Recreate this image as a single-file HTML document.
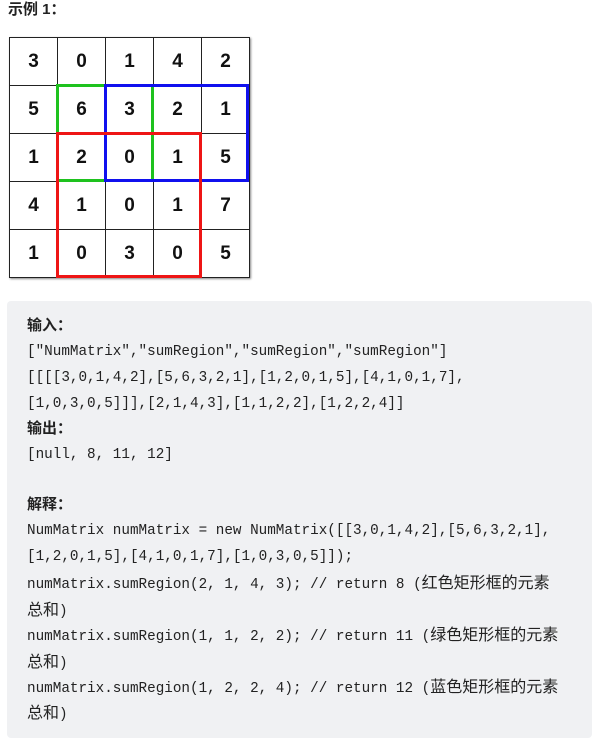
<!DOCTYPE html>
<html><head><meta charset="utf-8"><style>
body{margin:0;background:#fff;width:613px;height:741px;overflow:hidden;font-family:"Liberation Sans","Noto Sans CJK SC",sans-serif;}
.t{position:absolute;left:8px;top:0px;font-size:15px;font-weight:bold;color:#222;line-height:20px}
.g{position:absolute;left:9px;top:37px;border-collapse:collapse;box-shadow:1px 1px 2px #888}
.g td{width:47px;height:47px;border:1px solid #222;text-align:center;font-weight:bold;font-size:19px;padding:0;color:#111}
.b{position:absolute;box-sizing:border-box;border:3px solid}
.p{position:absolute;left:7px;top:301px;width:585px;height:437px;background:#f0f1f3;border-radius:4px}
.l{position:absolute;left:27px;font-family:"Liberation Mono","Noto Sans CJK SC",monospace;font-size:14.3px;color:#222;white-space:pre;line-height:20px}
.c{font-family:"Noto Sans CJK SC",sans-serif;font-size:16px;line-height:0}
.h{font-family:"Liberation Sans","Noto Sans CJK SC",sans-serif;font-weight:bold;font-size:15px;letter-spacing:0}
</style></head><body>
<div class="t">示例 1：</div>
<table class="g">
<tr><td>3</td><td>0</td><td>1</td><td>4</td><td>2</td></tr>
<tr><td>5</td><td>6</td><td>3</td><td>2</td><td>1</td></tr>
<tr><td>1</td><td>2</td><td>0</td><td>1</td><td>5</td></tr>
<tr><td>4</td><td>1</td><td>0</td><td>1</td><td>7</td></tr>
<tr><td>1</td><td>0</td><td>3</td><td>0</td><td>5</td></tr>
</table>
<div class="b" style="left:56px;top:84px;width:98px;height:98px;border-color:#1ec21e"></div>
<div class="b" style="left:104px;top:84px;width:145px;height:98px;border-color:#1010ee"></div>
<div class="b" style="left:56px;top:132px;width:146px;height:146px;border-color:#ee1515"></div>
<div class="p"></div>
<div class="l h" style="top:316px">输入：</div>
<div class="l" style="top:342px">["NumMatrix","sumRegion","sumRegion","sumRegion"]</div>
<div class="l" style="top:368px">[[[[3,0,1,4,2],[5,6,3,2,1],[1,2,0,1,5],[4,1,0,1,7],</div>
<div class="l" style="top:394px">[1,0,3,0,5]]],[2,1,4,3],[1,1,2,2],[1,2,2,4]]</div>
<div class="l h" style="top:419px">输出：</div>
<div class="l" style="top:445px">[null, 8, 11, 12]</div>
<div class="l h" style="top:495px">解释：</div>
<div class="l" style="top:521px">NumMatrix numMatrix = new NumMatrix([[3,0,1,4,2],[5,6,3,2,1],</div>
<div class="l" style="top:547px">[1,2,0,1,5],[4,1,0,1,7],[1,0,3,0,5]]);</div>
<div class="l" style="top:575px">numMatrix.sumRegion(2, 1, 4, 3); // return 8 (<span class="c">红色矩形框的元素</span></div>
<div class="l" style="top:602px"><span class="c">总和</span>)</div>
<div class="l" style="top:627px">numMatrix.sumRegion(1, 1, 2, 2); // return 11 (<span class="c">绿色矩形框的元素</span></div>
<div class="l" style="top:654px"><span class="c">总和</span>)</div>
<div class="l" style="top:679px">numMatrix.sumRegion(1, 2, 2, 4); // return 12 (<span class="c">蓝色矩形框的元素</span></div>
<div class="l" style="top:705px"><span class="c">总和</span>)</div>
</body></html>
